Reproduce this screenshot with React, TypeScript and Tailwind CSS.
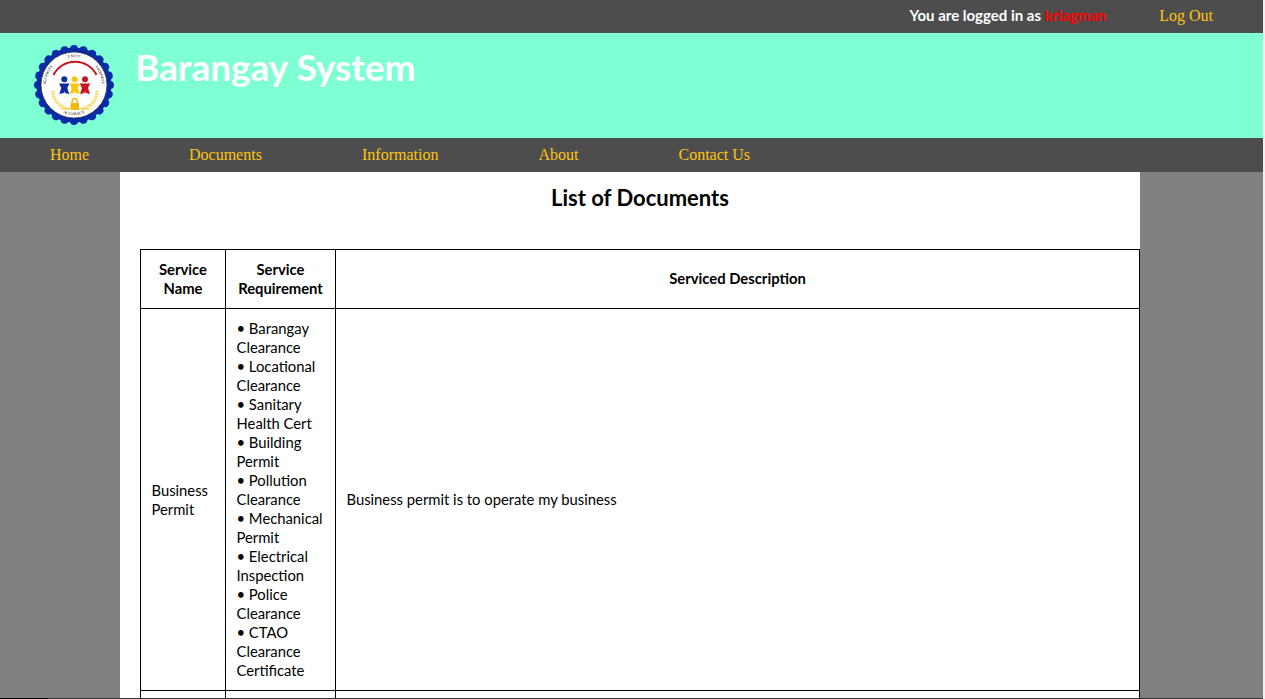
const requirements = [
  ['• Barangay', 'Clearance'],
  ['• Locational', 'Clearance'],
  ['• Sanitary', 'Health Cert'],
  ['• Building', 'Permit'],
  ['• Pollution', 'Clearance'],
  ['• Mechanical', 'Permit'],
  ['• Electrical', 'Inspection'],
  ['• Police', 'Clearance'],
  ['• CTAO', 'Clearance', 'Certificate'],
]

const navItems = [
  { label: 'Home', className: 'w-[139px]' },
  { label: 'Documents', className: 'w-[173px]' },
  { label: 'Information', className: 'w-[176.5px]' },
  { label: 'About', className: 'w-[140px]' },
  { label: 'Contact Us', className: '' },
]

function Person({ cx, color }: { cx: number; color: string }) {
  const body = `M${cx - 5.2} 39.5 L${cx + 5.2} 39.5 L${cx + 3} 44 L${cx + 5} 50 L${cx + 0.6} 49 L${cx} 47 L${cx - 0.6} 49 L${cx - 5} 50 L${cx - 3} 44 Z`
  return (
    <g fill={color}>
      <circle cx={cx} cy="35.3" r="3" />
      <path d={body} />
    </g>
  )
}

function Logo() {
  const teeth = Array.from({ length: 24 }, (_, i) => (i * 360) / 24)
  return (
    <svg width="82" height="82" viewBox="0 0 82 82" className="shrink-0 blur-[0.3px]">
      <defs>
        <path id="ring-top" d="M13 41 A28 28 0 0 1 69 41" />
        <path id="ring-bottom" d="M11 41 A30 30 0 0 0 71 41" />
      </defs>
      {teeth.map((deg) => (
        <circle key={deg} cx="41" cy="5" r="4" fill="#0b2aa6" transform={`rotate(${deg} 41 41)`} />
      ))}
      <circle cx="41" cy="41" r="37.5" fill="#0b2aa6" />
      <circle cx="41" cy="41" r="33" fill="#fff" stroke="#2a2a3a" strokeWidth="0.7" />
      <g fontFamily="'Liberation Serif', serif" fontWeight="700" fontSize="3.8" fill="#555">
        <text>
          <textPath href="#ring-top" startOffset="50%" textAnchor="middle">UNITY</textPath>
        </text>
        <text>
          <textPath href="#ring-top" startOffset="12%" textAnchor="middle">SECURITY</textPath>
        </text>
        <text>
          <textPath href="#ring-top" startOffset="88%" textAnchor="middle">FAIRNESS</textPath>
        </text>
        <text>
          <textPath href="#ring-bottom" startOffset="50%" textAnchor="middle">ACCURACY</textPath>
        </text>
      </g>
      <path d="M20.5 31 A24 24 0 0 1 63.5 31" fill="none" stroke="#c8141e" strokeWidth="2" />
      <Person cx={31.3} color="#0b2aa6" />
      <Person cx={41.7} color="#fdc50f" />
      <Person cx={52} color="#c8141e" />
      <path d="M20 47 C20 56 26 63 36 65" fill="none" stroke="#fbd65a" strokeWidth="3.2" strokeDasharray="1.6 0.8" />
      <path d="M64 47 C64 56 58 63 48 65" fill="none" stroke="#fbd65a" strokeWidth="3.2" strokeDasharray="1.6 0.8" />
      <path d="M27 65 H57" stroke="#f2c230" strokeWidth="0.8" />
      <rect x="37.5" y="59" width="8.5" height="7" rx="1" fill="#f2b90f" />
      <path d="M39.2 59 V57 A2.5 2.5 0 0 1 44.2 57 V59" fill="none" stroke="#f2b90f" strokeWidth="1.4" />
    </svg>
  )
}

export default function App() {
  return (
    <div className="h-[699px] w-[1265px] overflow-hidden bg-[#f0f0f0] font-['Lato',sans-serif] text-black">
      <div className="h-[698px] w-[1263px] overflow-hidden bg-[#808080]">
        <div className="flex h-[33px] items-center justify-end bg-[#4d4d4d] pb-px">
          <span className="pb-[2px] text-[15px] font-bold text-white">
            You are logged in as <span className="text-[#ff0000]">krlagman</span>
          </span>
          <a className="ml-[53px] mr-[50px] font-['Liberation_Serif',serif] text-[16px] text-[#fdc50f]">Log Out</a>
        </div>

        <div className="flex h-[105px] items-start bg-[#7fffd4] pl-[33px] pt-[11px]">
          <Logo />
          <h1 className="ml-[20px] mt-px text-[37px] font-bold leading-[44px] text-white">Barangay System</h1>
        </div>

        <nav className="flex h-[34px] items-center bg-[#4d4d4d] pl-[50px] font-['Liberation_Serif',serif] text-[16px] text-[#fdc50f]">
          {navItems.map((item) => (
            <a key={item.label} className={item.className}>
              {item.label}
            </a>
          ))}
        </nav>

        <main className="mx-[120px] w-[1020px] bg-white pl-[20px]">
          <h2 className="h-[77px] pt-[12px] text-center text-[22px] font-bold leading-[28px]">List of Documents</h2>
          <table className="w-[1000px] table-fixed border-collapse text-[14.8px] leading-[19px]">
            <colgroup>
              <col className="w-[85px]" />
              <col className="w-[110px]" />
              <col />
            </colgroup>
            <thead>
              <tr className="h-[59px]">
                <th className="border border-black px-[10px] font-bold">Service Name</th>
                <th className="border border-black px-[10px] font-bold">Service Requirement</th>
                <th className="border border-black px-[10px] pb-px font-bold">Serviced Description</th>
              </tr>
            </thead>
            <tbody>
              <tr className="h-[382px]">
                <td className="border border-black px-[10.5px]">Business Permit</td>
                <td className="border border-black px-[10.5px]">
                  {requirements.map((lines) =>
                    lines.map((line) => <div key={line + lines[0]}>{line}</div>),
                  )}
                </td>
                <td className="border border-black px-[10.5px]">Business permit is to operate my business</td>
              </tr>
              <tr className="h-[40px]">
                <td className="border border-black" />
                <td className="border border-black" />
                <td className="border border-black" />
              </tr>
            </tbody>
          </table>
        </main>
      </div>
      <div className="h-px w-[1263px] bg-[#333333]">
        <div className="h-px w-[48px] bg-black" />
      </div>
    </div>
  )
}
